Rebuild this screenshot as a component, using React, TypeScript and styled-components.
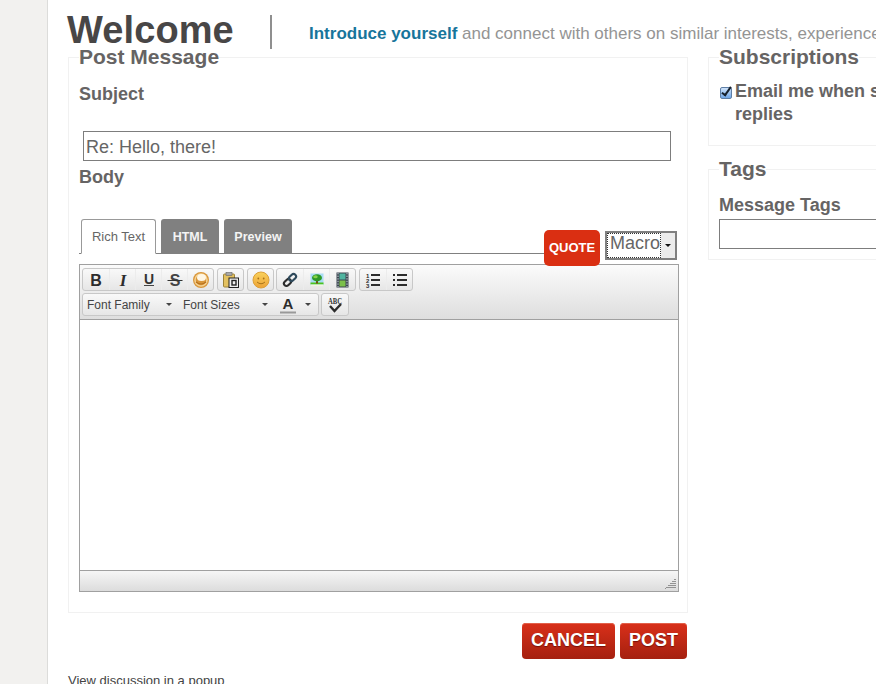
import styled, { createGlobalStyle } from 'styled-components';

const GlobalStyle = createGlobalStyle`
  html, body {
    margin: 0;
    padding: 0;
    height: 684px;
    overflow: hidden;
    background: #fff;
  }
  body {
    font-family: "Liberation Sans", Arial, sans-serif;
    color: #666;
  }
`;

const Page = styled.div`
  display: flex;
  width: 876px;
  height: 684px;
  overflow: hidden;
`;

const SideRail = styled.div`
  flex: 0 0 47px;
  background: #f2f1ef;
  border-right: 1px solid #dcdcda;
`;

const Content = styled.main`
  flex: 0 0 808px;
  padding: 12px 0 0 20px;
  box-sizing: border-box;
  min-width: 0;
`;

const Header = styled.header`
  display: flex;
  align-items: flex-start;
  height: 32px;
  white-space: nowrap;
`;

const Title = styled.h1`
  flex: 0 0 202px;
  margin: 0 0 0 -1px;
  padding-right: 1px;
  box-sizing: content-box;
  width: 201px;
  font-size: 38px;
  line-height: 37px;
  font-weight: bold;
  letter-spacing: 0.1px;
  color: #484646;
`;

const Divider = styled.div`
  flex: 0 0 2px;
  height: 34px;
  margin-top: 3px;
  background: #8f8f8f;
`;

const Intro = styled.p`
  margin: 12px 0 0 37px;
  font-size: 17px;
  line-height: 20px;
  color: #949494;
`;

const IntroLead = styled.strong`
  color: #17759b;
`;

const Columns = styled.div`
  display: flex;
  gap: 20px;
  width: 900px;
`;

const MainColumn = styled.div`
  flex: 0 0 620px;
`;

const SideColumn = styled.div`
  flex: 0 0 260px;
  display: flex;
  flex-direction: column;
  gap: 10px;
`;

const Panel = styled.fieldset<{ $height: number }>`
  margin: 0;
  padding: 0 8px 0 10px;
  height: ${props => props.$height}px;
  box-sizing: border-box;
  border: 1px solid #f1f1f1;
  min-width: 0;
`;

const PanelLegend = styled.legend`
  padding: 0;
  font-size: 21px;
  line-height: 26px;
  font-weight: bold;
  color: #666464;
`;

const FieldLabel = styled.label`
  display: block;
  font-size: 18px;
  line-height: 22px;
  font-weight: bold;
  color: #666464;
`;

const SubjectLabel = styled(FieldLabel)`
  margin-top: 13px;
`;

const SubjectInput = styled.input`
  display: block;
  width: 588px;
  height: 30px;
  margin: 26px 0 5px 4px;
  padding: 2px 2px 0 2px;
  box-sizing: border-box;
  border: 1px solid #7d7d7d;
  font-family: "Liberation Sans", Arial, sans-serif;
  font-size: 18px;
  color: #666;
  outline: none;
`;

const TabRow = styled.div`
  display: flex;
  align-items: flex-end;
  height: 35px;
  margin-top: 31px;
  position: relative;
  z-index: 1;
`;

const Tabs = styled.div`
  flex: 0 0 465px;
  display: flex;
  align-items: flex-end;
  gap: 5px;
  height: 35px;
  box-sizing: border-box;
  padding-left: 2px;
  border-bottom: 1px solid #808080;
`;

const Tab = styled.div<{ $active?: boolean; $width: number }>`
  width: ${props => props.$width}px;
  height: ${props => (props.$active ? 35 : 34)}px;
  margin-bottom: ${props => (props.$active ? '-1px' : '0')};
  padding-top: ${props => (props.$active ? '0' : '1px')};
  box-sizing: border-box;
  display: flex;
  align-items: center;
  justify-content: center;
  border-radius: 3px 3px 0 0;
  font-size: ${props => (props.$active ? 13 : 12.5)}px;
  font-weight: ${props => (props.$active ? 'normal' : 'bold')};
  color: ${props => (props.$active ? '#666' : '#f4f4f4')};
  background: ${props => (props.$active ? '#fff' : '#808080')};
  border: ${props => (props.$active ? '1px solid #999' : 'none')};
  border-bottom: ${props => (props.$active ? '1px solid #fff' : 'none')};
`;

const QuoteButton = styled.button`
  flex: 0 0 56px;
  height: 36px;
  margin-bottom: -12px;
  padding: 0 0 2px;
  border: none;
  border-radius: 5px;
  background: #da2f12;
  color: #fff;
  font-family: "Liberation Sans", Arial, sans-serif;
  font-size: 13px;
  font-weight: bold;
`;

const MacroSelect = styled.div`
  flex: 0 0 72px;
  height: 29px;
  margin: 0 0 -6px 5px;
  box-sizing: border-box;
  border: 2px solid #808080;
  display: flex;
  background: #fff;
`;

const MacroLabel = styled.div`
  flex: 1;
  overflow: hidden;
  border: 1px dotted #333;
  font-size: 18px;
  line-height: 18px;
  padding-left: 2px;
  color: #666;
`;

const MacroArrow = styled.div`
  flex: 0 0 14px;
  display: flex;
  align-items: center;
  justify-content: center;
  background: #ececec;

  &::after {
    content: '';
    border-left: 3px solid transparent;
    border-right: 3px solid transparent;
    border-top: 3px solid #111;
  }
`;

const Editor = styled.div`
  width: 600px;
  height: 328px;
  margin-top: 10px;
  box-sizing: border-box;
  border: 1px solid #a0a0a0;
  display: flex;
  flex-direction: column;
`;

const Toolbar = styled.div`
  height: 55px;
  box-sizing: border-box;
  padding: 3px 2px 0;
  border-bottom: 1px solid #a0a0a0;
  background: linear-gradient(#fbfbfb, #dedede);
  display: flex;
  flex-direction: column;
  gap: 2px;
`;

const ToolRow = styled.div`
  display: flex;
  gap: 3px;
`;

const ToolGroup = styled.div<{ $tuck?: boolean }>`
  display: flex;
  height: 23px;
  box-sizing: border-box;
  margin-left: ${props => (props.$tuck ? '-1px' : '0')};
  border: 1px solid #c8c8c8;
  border-radius: 3px;
  background: linear-gradient(#f9f9f9, #e6e6e6);
`;

const ToolButton = styled.div<{ $single?: boolean }>`
  width: ${props => (props.$single ? 25 : 26)}px;
  display: flex;
  align-items: center;
  justify-content: center;
  box-sizing: border-box;
  & + & {
    border-left: 1px solid #ececec;
  }
`;

const ToolSelect = styled.div<{ $width: number }>`
  width: ${props => props.$width}px;
  box-sizing: border-box;
  padding: 0 7px 0 4px;
  display: flex;
  align-items: center;
  justify-content: space-between;
  font-size: 12px;
  color: #444;
`;

const Caret = styled.span`
  border-left: 3.5px solid transparent;
  border-right: 3.5px solid transparent;
  border-top: 3.5px solid #444;
`;

const WriteArea = styled.div`
  flex: 1;
  background: #fff;
`;

const StatusBar = styled.div`
  height: 21px;
  box-sizing: border-box;
  border-top: 1px solid #a0a0a0;
  background: linear-gradient(#f6f6f6, #dcdcdc);
  display: flex;
  justify-content: flex-end;
  align-items: flex-end;
  padding: 0 2px 2px 0;
`;

const Actions = styled.div`
  display: flex;
  justify-content: flex-end;
  gap: 5px;
  margin-top: 10px;
  padding-right: 1px;
`;

const ActionButton = styled.button<{ $width: number }>`
  width: ${props => props.$width}px;
  height: 36px;
  padding: 0 0 2px;
  border: none;
  border-radius: 4px;
  background: linear-gradient(#d9301a, #a5200f);
  box-shadow: inset 0 1px 0 #e2604a;
  color: #fff;
  font-family: "Liberation Sans", Arial, sans-serif;
  font-size: 18px;
  font-weight: bold;
  text-shadow: 0 1px 1px rgba(70, 0, 0, 0.6);
`;

const FooterLink = styled.div`
  margin-top: 14px;
  font-size: 13px;
  line-height: 16px;
  color: #444;
`;

const CheckRow = styled.div`
  display: flex;
  gap: 2px;
  margin-top: 10px;
  width: 190px;
  white-space: nowrap;
`;

const CheckText = styled.div`
  font-size: 18px;
  line-height: 23px;
  font-weight: bold;
  color: #666464;
`;

const CheckBox = styled.input`
  flex: 0 0 12px;
  appearance: none;
  position: relative;
  width: 12px;
  height: 12px;
  margin: 7px 1px 0 1px;
  box-sizing: border-box;
  border: 1px solid #5f7fa5;
  border-radius: 2px;
  background: linear-gradient(#cfe3fa, #6fa6e6);

  &::after {
    content: '';
    position: absolute;
    left: 3px;
    top: -3px;
    width: 3px;
    height: 9px;
    border: solid #16202c;
    border-width: 0 2px 2px 0;
    transform: rotate(35deg);
  }
`;

const TagsLabel = styled(FieldLabel)`
  margin-top: 12px;
`;

const TagInput = styled.input`
  display: block;
  width: 240px;
  height: 30px;
  margin-top: 3px;
  box-sizing: border-box;
  border: 1px solid #7d7d7d;
  outline: none;
`;

const labelFont = { fontFamily: 'Liberation Sans', fontWeight: 'bold' };

const Glyph = ({ children }: { children: React.ReactNode }) => (
  <svg width="16" height="16" viewBox="0 0 16 16">{children}</svg>
);

function App() {
  return (
    <>
      <GlobalStyle />
      <Page>
        <SideRail />
        <Content>
          <Header>
            <Title>Welcome</Title>
            <Divider />
            <Intro>
              <IntroLead>Introduce yourself</IntroLead> and connect with others on similar interests, experiences
            </Intro>
          </Header>
          <Columns>
            <MainColumn>
              <Panel $height={569}>
                <PanelLegend>Post Message</PanelLegend>
                <SubjectLabel>Subject</SubjectLabel>
                <SubjectInput defaultValue="Re: Hello, there!" />
                <FieldLabel>Body</FieldLabel>
                <TabRow>
                  <Tabs>
                    <Tab $active $width={75}>Rich Text</Tab>
                    <Tab $width={58}>HTML</Tab>
                    <Tab $width={68}>Preview</Tab>
                  </Tabs>
                  <QuoteButton>QUOTE</QuoteButton>
                  <MacroSelect>
                    <MacroLabel>Macro</MacroLabel>
                    <MacroArrow />
                  </MacroSelect>
                </TabRow>
                <Editor>
                  <Toolbar>
                    <ToolRow>
                      <ToolGroup>
                        <ToolButton>
                          <Glyph><text x="8" y="13.500" textAnchor="middle" fontSize="16" {...labelFont} fill="#2c2c2c">B</text></Glyph>
                        </ToolButton>
                        <ToolButton>
                          <Glyph><text x="8" y="13.500" textAnchor="middle" fontSize="17" fontWeight="bold" fontStyle="italic" fontFamily="Liberation Serif" fill="#2c2c2c">I</text></Glyph>
                        </ToolButton>
                        <ToolButton>
                          <Glyph>
                            <text x="8" y="11.500" textAnchor="middle" fontSize="14" {...labelFont} fill="#333">U</text>
                            <rect x="3" y="13" width="10" height="1" fill="#444" />
                          </Glyph>
                        </ToolButton>
                        <ToolButton>
                          <Glyph>
                            <text x="8" y="13.500" textAnchor="middle" fontSize="16" {...labelFont} fill="#444">S</text>
                            <rect x="0.500" y="8" width="15" height="1" fill="#333" />
                          </Glyph>
                        </ToolButton>
                        <ToolButton>
                          <svg width="18" height="18" viewBox="0 0 18 18">
                            <circle cx="9" cy="9" r="8" fill="#d9963a" />
                            <circle cx="9" cy="9" r="6" fill="none" stroke="#f5d394" strokeWidth="1.5" />
                            <ellipse cx="9.500" cy="6.500" rx="4.500" ry="3.500" fill="#fff6e4" />
                            <path d="M4 11 Q9 15 14 11" fill="none" stroke="#b5701e" strokeWidth="1.2" />
                          </svg>
                        </ToolButton>
                      </ToolGroup>
                      <ToolGroup>
                        <ToolButton $single>
                          <svg width="18" height="18" viewBox="0 0 18 18">
                            <rect x="1.500" y="3" width="11" height="13" rx="1" fill="#e3c160" stroke="#9c8238" />
                            <rect x="4" y="1.500" width="6" height="3" fill="#a8a8a8" stroke="#666" strokeWidth=".6" />
                            <rect x="7" y="7" width="9.500" height="9.500" fill="#eee" stroke="#222" />
                            <rect x="10" y="9.500" width="4" height="4.500" fill="none" stroke="#222" strokeWidth="1.4" />
                          </svg>
                        </ToolButton>
                      </ToolGroup>
                      <ToolGroup>
                        <ToolButton $single>
                          <svg width="18" height="18" viewBox="0 0 18 18">
                            <defs>
                              <linearGradient id="smile" x1="0" y1="0" x2="0" y2="1">
                                <stop offset="0" stopColor="#f9d25c" />
                                <stop offset="1" stopColor="#eda336" />
                              </linearGradient>
                            </defs>
                            <circle cx="9" cy="9" r="8" fill="url(#smile)" stroke="#dca03a" />
                            <circle cx="6.300" cy="7.500" r=".9" fill="#a8741a" />
                            <circle cx="11.700" cy="7.500" r=".9" fill="#a8741a" />
                            <path d="M5 11 Q9 14.500 13 11" fill="none" stroke="#a8741a" strokeWidth="1" />
                          </svg>
                        </ToolButton>
                      </ToolGroup>
                      <ToolGroup $tuck>
                        <ToolButton>
                          <svg width="16" height="16" viewBox="0 0 16 16">
                            <g fill="none" stroke="#2b2b2b" strokeWidth="2.1" transform="rotate(-45 8 8)">
                              <rect x="0.500" y="5.500" width="8" height="5" rx="2.500" />
                              <rect x="7.500" y="5.500" width="8" height="5" rx="2.500" stroke="#2f4a5c" />
                            </g>
                          </svg>
                        </ToolButton>
                        <ToolButton>
                          <svg width="14" height="14" viewBox="0 0 14 14">
                            <rect x="0.500" y="0.500" width="13" height="12.500" fill="#a9dcf5" />
                            <rect x="0.500" y="9.500" width="13" height="2" fill="#4ec31e" />
                            <rect x="0.500" y="11.500" width="13" height="1.500" fill="#f2f6e0" />
                            <rect x="6" y="7" width="2" height="3.500" fill="#7a4a1e" />
                            <ellipse cx="7" cy="4.800" rx="5" ry="3.600" fill="#2e9a28" />
                            <ellipse cx="5.500" cy="3.800" rx="2.200" ry="1.500" fill="#86d24a" />
                          </svg>
                        </ToolButton>
                        <ToolButton>
                          <svg width="13" height="16" viewBox="0 0 13 16">
                            <rect x="0.500" y="0.500" width="12" height="15" fill="#3c4650" />
                            <rect x="3.500" y="1.500" width="6" height="6" fill="#4fb4a0" />
                            <rect x="3.500" y="8.500" width="6" height="6" fill="#7cc04a" />
                            <path d="M2 1v14M11 1v14" stroke="#cdd3dc" strokeWidth="1" strokeDasharray="1.400 1.200" />
                          </svg>
                        </ToolButton>
                      </ToolGroup>
                      <ToolGroup>
                        <ToolButton>
                          <Glyph>
                            <path d="M6 3h9M6 8h9M6 13h9" stroke="#2c2c2c" strokeWidth="2" />
                            <text x="1" y="6" fontSize="6" {...labelFont} fill="#2c2c2c">1</text>
                            <text x="1" y="11" fontSize="6" {...labelFont} fill="#2c2c2c">2</text>
                            <text x="1" y="16" fontSize="6" {...labelFont} fill="#2c2c2c">3</text>
                          </Glyph>
                        </ToolButton>
                        <ToolButton>
                          <Glyph>
                            <path d="M5 3h10M5 8h10M5 13h10M1 3h2M1 8h2M1 13h2" stroke="#2c2c2c" strokeWidth="2" />
                          </Glyph>
                        </ToolButton>
                      </ToolGroup>
                    </ToolRow>
                    <ToolRow>
                      <ToolGroup>
                        <ToolSelect $width={96}>Font Family<Caret /></ToolSelect>
                        <ToolSelect $width={96}>Font Sizes<Caret /></ToolSelect>
                        <ToolSelect $width={43}>
                          <svg width="18" height="18" viewBox="0 0 18 18">
                            <text x="9" y="13" textAnchor="middle" fontSize="15" {...labelFont} fill="#2c2c2c">A</text>
                            <rect x="1" y="15.500" width="16" height="2" fill="#999" />
                          </svg>
                          <Caret />
                        </ToolSelect>
                      </ToolGroup>
                      <ToolGroup $tuck>
                        <ToolButton>
                          <svg width="18" height="18" viewBox="0 0 18 18">
                            <text x="9" y="7.500" textAnchor="middle" fontSize="8.500" textLength="14" lengthAdjust="spacingAndGlyphs" fontWeight="bold" fontFamily="Liberation Serif" fill="#333">ABC</text>
                            <path d="M4 10 L8.500 15 L15 8" fill="none" stroke="#2c2c2c" strokeWidth="2.400" />
                          </svg>
                        </ToolButton>
                      </ToolGroup>
                    </ToolRow>
                  </Toolbar>
                  <WriteArea />
                  <StatusBar>
                    <svg width="11" height="11" viewBox="0 0 11 11">
                      <path d="M10 1v10M8 3v8M6 5v6M4 7v4M2 9v2M0 10v1" stroke="#5c5c5c" strokeWidth="1.200" strokeDasharray="1 1" />
                    </svg>
                  </StatusBar>
                </Editor>
              </Panel>
              <Actions>
                <ActionButton $width={93}>CANCEL</ActionButton>
                <ActionButton $width={67}>POST</ActionButton>
              </Actions>
              <FooterLink>View discussion in a popup</FooterLink>
            </MainColumn>
            <SideColumn>
              <Panel $height={102}>
                <PanelLegend>Subscriptions</PanelLegend>
                <CheckRow>
                  <CheckBox type="checkbox" defaultChecked />
                  <CheckText>Email me when someone<br />replies</CheckText>
                </CheckRow>
              </Panel>
              <Panel $height={104}>
                <PanelLegend>Tags</PanelLegend>
                <TagsLabel>Message Tags</TagsLabel>
                <TagInput />
              </Panel>
            </SideColumn>
          </Columns>
        </Content>
      </Page>
    </>
  );
}

export default App;
